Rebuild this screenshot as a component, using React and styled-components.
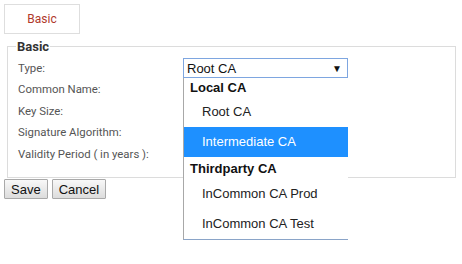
import React from "react";
import styled, { createGlobalStyle } from "styled-components";

const Global = createGlobalStyle`
  html, body { margin: 0; padding: 0; background: #fff; }
  body { font-family: Roboto, "Liberation Sans", Arial, sans-serif; }
  * { box-sizing: border-box; }
`;

const Page = styled.div`
  width: 462px;
  height: 264px;
  overflow: hidden;
  position: relative;
`;

const TabBar = styled.div`
  display: flex;
  padding: 4px 0 0 4px;
`;

const Tab = styled.div`
  width: 76px;
  height: 30px;
  border: 1px solid #dedede;
  display: flex;
  align-items: center;
  justify-content: center;
  font-size: 12px;
  color: #b0392b;
`;

const Fieldset = styled.fieldset`
  margin: 5px 6px 0 7px;
  padding: 0 8px 13px 8px;
  border: 1px solid #dcdcdc;
  min-width: 0;
`;

const Legend = styled.legend`
  padding: 0 1px;
  font-size: 13px;
  font-weight: bold;
  color: #333;
  line-height: 15px;
`;

const Rows = styled.div`
  display: flex;
  flex-direction: column;
  padding-top: 4px;
`;

const Row = styled.div`
  display: grid;
  grid-template-columns: 165px 165px;
  align-items: center;
  height: ${(p) => p.$h}px;
  padding-left: 2px;
`;

const Label = styled.span`
  font-size: 11.4px;
  color: #555;
`;

const SelectWrap = styled.div`
  position: relative;
  height: 20px;
`;

const SelectBox = styled.div`
  height: 20px;
  border: 1px solid #7ea6e0;
  display: flex;
  align-items: center;
  justify-content: space-between;
  padding: 0 5px 0 3px;
  font-family: "Liberation Sans", Arial, sans-serif;
  font-size: 13px;
  color: #111;
  background: #fff;
`;

const Arrow = styled.span`
  font-size: 10px;
  color: #111;
`;

const Dropdown = styled.div`
  position: absolute;
  top: 20px;
  left: 0;
  width: 165px;
  background: #fff;
  border-left: 1px solid #a8a8a8;
  border-bottom: 1px solid #8aa4c8;
  font-family: "Liberation Sans", Arial, sans-serif;
  font-size: 13px;
  color: #222;
  z-index: 5;
`;

const GroupHead = styled.div`
  height: ${(p) => p.$h}px;
  display: flex;
  align-items: center;
  padding-left: 6px;
  font-weight: bold;
  color: #111;
`;

const Option = styled.div`
  height: 30px;
  display: flex;
  align-items: center;
  padding-left: 18px;
  padding-bottom: 1px;
  background: ${(p) => (p.$active ? "#1e90ff" : "#fff")};
  color: ${(p) => (p.$active ? "#fff" : "#222")};
`;

const Buttons = styled.div`
  display: flex;
  gap: 4px;
  padding: 1px 0 0 4px;
`;

const Button = styled.button`
  height: 20px;
  padding: 0 6px;
  font-family: "Liberation Sans", Arial, sans-serif;
  font-size: 13px;
  color: #111;
  border: 1px solid #a9a9a9;
  border-radius: 1px;
  background: linear-gradient(#f8f8f8, #dcdcdc);
`;

export default function App() {
  return (
    <Page>
      <Global />
      <TabBar>
        <Tab>Basic</Tab>
      </TabBar>
      <Fieldset>
        <Legend>Basic</Legend>
        <Rows>
          <Row $h={20}>
            <Label>Type:</Label>
            <SelectWrap>
              <SelectBox>
                <span>Root CA</span>
                <Arrow>▼</Arrow>
              </SelectBox>
              <Dropdown>
                <GroupHead $h={19}>Local CA</GroupHead>
                <Option>Root CA</Option>
                <Option $active>Intermediate CA</Option>
                <GroupHead $h={22}>Thirdparty CA</GroupHead>
                <Option>InCommon CA Prod</Option>
                <Option>InCommon CA Test</Option>
              </Dropdown>
            </SelectWrap>
          </Row>
          <Row $h={22}><Label>Common Name:</Label></Row>
          <Row $h={21}><Label>Key Size:</Label></Row>
          <Row $h={22}><Label>Signature Algorithm:</Label></Row>
          <Row $h={21}><Label>Validity Period ( in years ):</Label></Row>
        </Rows>
      </Fieldset>
      <Buttons>
        <Button>Save</Button>
        <Button>Cancel</Button>
      </Buttons>
    </Page>
  );
}
